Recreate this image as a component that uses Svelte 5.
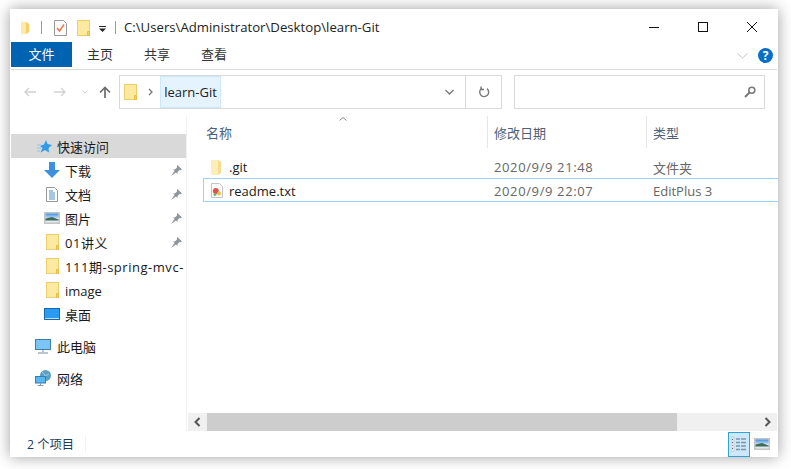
<script>
  const quick = [
    { label: '下载', icon: 'down', pin: true },
    { label: '文档', icon: 'doc', pin: true },
    { label: '图片', icon: 'pic', pin: true },
    { label: '01讲义', icon: 'folder', pin: true, wide: true },
    { label: '111期-spring-mvc-', icon: 'folder', pin: false, wide: true },
    { label: 'image', icon: 'folder', pin: false },
    { label: '桌面', icon: 'desk', pin: false }
  ];
</script>

{#snippet folder(cls)}
  <svg class={cls} viewBox="0 0 13 16" width="13" height="16">
    <rect x="0.5" y="0.5" width="12" height="15" fill="#ffe9a0" stroke="#eccf6a"/>
    <path d="M10.5 15.5V11.5H12.5V15.5Z" fill="#f5cf5c" stroke="#e9bf47" stroke-width="1"/>
  </svg>
{/snippet}

{#snippet pic()}
  <svg viewBox="0 0 16 12" width="16" height="12">
    <defs>
      <linearGradient id="sky" x1="0" y1="0" x2="0" y2="1">
        <stop offset="0" stop-color="#3f8fe0"/><stop offset="1" stop-color="#cfe5f5"/>
      </linearGradient>
    </defs>
    <rect x="0" y="0" width="16" height="12" fill="#c4c4c4"/>
    <rect x="1.500" y="1.500" width="13" height="9" fill="#dfe9ef"/>
    <rect x="1.500" y="1.500" width="13" height="5" fill="url(#sky)"/>
    <path d="M1.500 6.500L8 5L14.500 7.500V8.500H1.500Z" fill="#3e6a58"/>
  </svg>
{/snippet}

<div class="page">
  <div class="window">
    <header class="titlebar">
      <svg class="t-small" viewBox="0 0 9 13" width="9" height="13">
        <path d="M0 1H5L8 3V11L5 13H0Z" fill="#ffe9a8"/><path d="M5 1L8 3V11L5 13Z" fill="#f3d069"/>
      </svg>
      <span class="t-sep s1"></span>
      <svg class="t-doc" viewBox="0 0 13 16" width="13" height="16">
        <path d="M.5.5H9.500L12.500 3.500V15.500H.5Z" fill="#fafafa" stroke="#9a9a9a"/>
        <path d="M3 8L5.500 11L10 4.500" fill="none" stroke="#e8764a" stroke-width="1.400"/>
      </svg>
      {@render folder('t-folder')}
      <svg class="t-drop" viewBox="0 0 7 6" width="7" height="6">
        <rect x="0" y="0" width="7" height="1" fill="#222"/><path d="M0 2.500H7L3.500 6Z" fill="#222"/>
      </svg>
      <span class="t-sep s2"></span>
      <span class="title">C:\Users\Administrator\Desktop\learn-Git</span>
      <div class="controls">
        <svg viewBox="0 0 10 10" width="10" height="10"><path d="M0 5.500H10" stroke="#111" fill="none"/></svg>
        <svg viewBox="0 0 10 10" width="10" height="10"><rect x=".5" y=".5" width="9" height="9" stroke="#111" fill="none"/></svg>
        <svg viewBox="0 0 10 10" width="10" height="10"><path d="M0 0L10 10M10 0L0 10" stroke="#111" fill="none"/></svg>
      </div>
    </header>

    <nav class="ribbon">
      <span class="tab active">文件</span>
      <span class="tab t1">主页</span>
      <span class="tab t2">共享</span>
      <span class="tab t3">查看</span>
      <svg class="collapse" viewBox="0 0 11 6" width="11" height="6"><path d="M.5.5L5.500 5L10.500.5" fill="none" stroke="#c4c4c4"/></svg>
      <span class="help">?</span>
    </nav>

    <div class="toolbar">
      <div class="navs">
        <svg viewBox="0 0 12 10" width="12" height="10"><path d="M12 5H1M5 1L1 5L5 9" fill="none" stroke="#d2d2d2" stroke-width="1.400"/></svg>
        <svg class="fw" viewBox="0 0 12 10" width="12" height="10"><path d="M0 5H11M7 1L11 5L7 9" fill="none" stroke="#d2d2d2" stroke-width="1.400"/></svg>
        <svg class="dn" viewBox="0 0 6 4" width="6" height="4"><path d="M.5.5L3 3L5.500.5" fill="none" stroke="#d2d2d2"/></svg>
        <svg class="up" viewBox="0 0 12 12" width="12" height="12"><path d="M6 12V1.500M1 6.500L6 1.500L11 6.500" fill="none" stroke="#6d6d6d" stroke-width="1.700"/></svg>
      </div>
      <div class="address">
        {@render folder('a-folder')}
        <svg class="a-arrow" viewBox="0 0 5 8" width="5" height="8"><path d="M1 1L4 4L1 7" fill="none" stroke="#777" stroke-width="1.300"/></svg>
        <span class="crumb">learn-Git</span>
        <svg class="a-chev" viewBox="0 0 9 6" width="9" height="6"><path d="M.5 1L4.500 5L8.500 1" fill="none" stroke="#777" stroke-width="1.300"/></svg>
        <span class="refresh">
          <svg viewBox="0 0 12 12" width="12" height="12"><path d="M4 2.200A4.500 4.500 0 1 0 9 2.600M3 .5V3.500H6" fill="none" stroke="#7a7a7a" stroke-width="1.400"/></svg>
        </span>
      </div>
      <div class="search">
        <svg viewBox="0 0 12 12" width="12" height="12"><circle cx="7.800" cy="4.200" r="3" fill="none" stroke="#777" stroke-width="1.500"/><path d="M5.500 6.500L1 11" stroke="#777" stroke-width="2"/></svg>
      </div>
    </div>

    <div class="body">
      <aside class="side">
        <div class="row top hover">
          <svg class="qa" viewBox="0 0 15 13" width="15" height="13"><path d="M9 0L10.500 4L15 5L11.500 8L12 12.500L8 10L3.500 12.500L5.500 8L3 6L7 4.500Z" fill="#2f9be8"/><path d="M0 5H4M0 8H4M0 11H3" stroke="#8cc8f2"/></svg>
          <span>快速访问</span>
        </div>
        {#each quick as item}
          <div class="row sub">
            <span class="ico">
              {#if item.icon === 'down'}
                <svg viewBox="0 0 16 16" width="16" height="16"><path d="M5 0H11V8H16L8 16L0 8H5Z" fill="#3d8fdf"/></svg>
              {:else if item.icon === 'doc'}
                <svg viewBox="0 0 12 15" width="12" height="15"><path d="M.5.5H8.500L11.500 3.500V14.500H.5Z" fill="#fff" stroke="#999"/><path d="M3 4H7M3 6H9M3 8H9M3 10H9M3 12H9" stroke="#4a8fc7"/></svg>
              {:else if item.icon === 'pic'}
                {@render pic()}
              {:else if item.icon === 'folder'}
                {@render folder('s-folder')}
              {:else}
                <svg viewBox="0 0 16 12" width="16" height="12"><rect x=".5" y=".5" width="15" height="11" fill="#2a9bf0" stroke="#1468b0"/><path d="M1 10.500H15" stroke="#bfe0f8"/></svg>
              {/if}
            </span>
            <span class="label" class:wide={item.wide}>{item.label}</span>
            {#if item.pin}
              <svg class="pin" viewBox="0 0 11 11" width="11" height="11"><path d="M6.500 0L11 4.500L9.800 5.200L8.600 4.900L6.500 7.300V9L2 4.500H3.700L6.100 2.400L5.800 1.200ZM3.500 6L0 11L5 7.500Z" fill="#8f979d"/></svg>
            {/if}
          </div>
        {/each}
        <div class="row top gap">
          <svg class="ico-top" viewBox="0 0 16 15" width="16" height="15"><rect x=".5" y=".5" width="15" height="10" fill="#7cc4f5" stroke="#3d7fa8"/><path d="M8 11V13M3 14H13" stroke="#a9b2b9" stroke-width="1.500"/></svg>
          <span>此电脑</span>
        </div>
        <div class="row top gap">
          <svg class="ico-top" viewBox="0 0 16 16" width="16" height="16"><circle cx="10.500" cy="5.500" r="5.500" fill="#5a9fc4"/><path d="M7 2Q10 4 10 6L14 4" fill="none" stroke="#9fd0e6"/><rect x=".5" y="6.500" width="10" height="6.500" fill="#59b6ef" stroke="#2f7fb3"/><path d="M5.500 13V15M2.500 15.500H8.500" stroke="#8a99a5"/></svg>
          <span>网络</span>
        </div>
      </aside>

      <main class="list">
        <div class="cols">
          <svg class="sort" viewBox="0 0 8 4" width="8" height="4"><path d="M.5 3.500L4 .5L7.500 3.500" fill="none" stroke="#8c8c8c"/></svg>
          <span class="h c-name">名称</span>
          <span class="h c-date">修改日期</span>
          <span class="h c-type">类型</span>
        </div>
        <div class="file first">
          <svg class="f-ico" viewBox="0 0 10 16" width="10" height="16"><path d="M0 1H7V16H1L0 15Z" fill="#fdeeb8"/><path d="M7 1L10 3V14L7 16Z" fill="#f7dc8d"/></svg>
          <span class="f-name">.git</span>
          <span class="f-date">2020/9/9 21:48</span>
          <span class="f-type">文件夹</span>
        </div>
        <div class="file selected">
          <svg class="f-ico doc" viewBox="0 0 12 15" width="12" height="15"><path d="M.5.5H8.500L11.500 3.500V14.500H.5Z" fill="#fff" stroke="#c4c4c4"/><circle cx="4.800" cy="8" r="3" fill="#e0524a"/><circle cx="8" cy="10.500" r="2" fill="#e8c14a"/><circle cx="4" cy="11.500" r="1.500" fill="#7fb069"/></svg>
          <span class="f-name">readme.txt</span>
          <span class="f-date">2020/9/9 22:07</span>
          <span class="f-type">EditPlus 3</span>
        </div>
        <div class="spacer"></div>
        <div class="hscroll">
          <span class="sb-btn"><svg viewBox="0 0 7 10" width="7" height="10"><path d="M5.500 1L1.500 5L5.500 9" fill="none" stroke="#555" stroke-width="2"/></svg></span>
          <span class="thumb"></span>
          <span class="sb-fill"></span>
          <span class="sb-btn"><svg viewBox="0 0 7 10" width="7" height="10"><path d="M1.500 1L5.500 5L1.500 9" fill="none" stroke="#555" stroke-width="2"/></svg></span>
        </div>
      </main>
    </div>

    <footer class="status">
      <span class="count">2 个项目</span>
      <span class="st-sep"></span>
      <span class="view on">
        <svg viewBox="0 0 16 16" width="16" height="16">
          <rect x="0" y="1" width="3" height="15" fill="#e6e6e6" stroke="#b5bcc2" stroke-width=".5"/>
          <path d="M1.500 3V4M1.500 6V7" stroke="#667"/><path d="M1.500 9V10" stroke="#d88"/><path d="M1.500 12V13" stroke="#667"/>
          <path d="M5 3H9M10 3H15M5 6.500H9M10 6.500H15M5 10H9M10 10H15M5 13.500H9M10 13.500H15" stroke="#7d94a5" stroke-width="1.300"/>
        </svg>
      </span>
      <span class="view pic">{@render pic()}</span>
    </footer>
  </div>
</div>

<style>
  :global(body) { margin: 0; background: #fff; }
  .page {
    width: 791px; height: 469px; box-sizing: border-box;
    padding: 9px 13px 12px 10px; overflow: hidden; background: #fff;
  }
  .window {
    width: 768px; height: 448px; background: #fff; display: flex; flex-direction: column;
    box-shadow: 0 0 14px rgba(0,0,0,.38);
    font: 13px "Open Sans", "Noto Sans CJK SC", sans-serif; color: #1a1a1a;
  }
  .titlebar { height: 31px; flex: none; display: flex; align-items: center; padding: 6px 0 0 11px; box-sizing: border-box; }
  .t-sep { width: 1px; height: 13px; background: #9a9a9a; }
  .s1 { margin-left: 11px; }
  .t-doc { margin-left: 12px; }
  .t-folder { margin-left: 10px; }
  .t-drop { margin-left: 9px; margin-top: 2px; }
  .s2 { margin-left: 9px; }
  .title { margin-left: 8px; margin-top: -2px; font-size: 13.2px; color: #222; line-height: 16px; white-space: nowrap; }
  .controls { margin-left: auto; display: flex; gap: 39px; padding-right: 21px; margin-top: -2px; }

  .ribbon {
    height: 30px; flex: none; display: flex; align-items: flex-start; box-sizing: border-box;
    padding: 2px 0 0 1px; border-bottom: 1px solid #dadada; font-size: 13px; margin-left: 1px; margin-right: 1px;
  }
  .tab { height: 25px; line-height: 25px; color: #333; }
  .tab.active { width: 61px; background: #0063b1; color: #fff; text-align: center; margin-left: -1px; }
  .t1 { margin-left: 15px; }
  .t2 { margin-left: 31px; }
  .t3 { margin-left: 31px; }
  .collapse { margin-left: auto; margin-top: 11px; }
  .help {
    width: 15px; height: 15px; border-radius: 50%; background: #0a6fc8; color: #fff; font-size: 12px; font-weight: 700;
    line-height: 15px; text-align: center; margin: 6px 4px 0 10px;
  }

  .toolbar { height: 46px; flex: none; display: flex; padding-top: 5px; box-sizing: border-box; }
  .navs { width: 109px; flex: none; height: 34px; display: flex; align-items: center; padding: 0 0 0 14px; box-sizing: border-box; }
  .fw { margin-left: 18px; }
  .dn { margin-left: 16px; }
  .up { margin-left: 11px; }
  .address {
    width: 383px; height: 34px; box-sizing: border-box; border: 1px solid #d9d9d9; display: flex; align-items: center; flex: none;
  }
  .a-folder { margin-left: 4px; }
  .a-arrow { margin-left: 11px; }
  .crumb {
    margin-left: 7px; width: 61px; height: 32px; box-sizing: border-box; background: #e5f3ff; border: 1px solid #cce8ff;
    line-height: 30px; text-align: center; color: #222;
  }
  .a-chev { margin-left: auto; margin-right: 11px; }
  .refresh { width: 35px; height: 32px; border-left: 1px solid #d9d9d9; display: flex; align-items: center; justify-content: center; }
  .search {
    margin-left: 12px; width: 251px; height: 34px; box-sizing: border-box; border: 1px solid #d9d9d9;
    display: flex; align-items: center; justify-content: flex-end; padding-right: 8px; flex: none;
  }

  .body { flex: 1; min-height: 0; display: flex; }
  .side { width: 176px; flex: none; box-sizing: border-box; padding-top: 18px; border-right: 1px solid #f0f0f0; margin-left: 1px; }
  .row { height: 24px; display: flex; align-items: center; color: #1a1a1a; white-space: nowrap; overflow: hidden; }
  .top { padding-left: 24px; }
  .top svg { margin-right: 6px; flex: none; }
  .hover { background: #d9d9d9; }
  .qa { margin-left: 2px; margin-right: 5px !important; }
  .sub { padding-left: 33px; }
  .ico { width: 16px; height: 16px; display: flex; align-items: center; justify-content: center; flex: none; }
  .label { margin-left: 5px; margin-top: 2px; line-height: 22px; }
  .label.wide { letter-spacing: .53px; }
  .pin { margin-left: auto; margin-right: 4px; flex: none; }
  .gap { margin-top: 8px; }

  .list { flex: 1; min-width: 0; display: flex; flex-direction: column; padding-left: 1px; }
  .cols { height: 33px; flex: none; position: relative; color: #4c607a; }
  .cols .h { position: absolute; top: 0; height: 32px; line-height: 35px; }
  .sort { position: absolute; left: 151px; top: 1px; }
  .c-name { left: 18px; }
  .c-date { left: 299px; border-left: 1px solid #e5e5e5; padding-left: 6px; }
  .c-type { left: 458px; border-left: 1px solid #e5e5e5; padding-left: 6px; }
  .file { height: 24px; box-sizing: border-box; display: grid; align-items: center; margin-left: 15px; flex: none; }
  .first { margin-top: 6px; margin-bottom: -1px; padding-left: 8px; grid-template-columns: 17px 266px 159px 1fr; }
  .selected { border: 1px solid #99d1ff; border-right: none; padding-left: 7px; grid-template-columns: 17px 266px 159px 1fr; padding-top: 1px; }
  .f-name { color: #1a1a1a; margin-left: 1px; }
  .f-date { color: #666; letter-spacing: .62px; }
  .f-type { color: #666; }
  .spacer { flex: 1; }
  .hscroll { height: 18px; flex: none; display: flex; background: #f0f0f0; margin-right: 1px; }
  .sb-btn { width: 19px; display: flex; align-items: center; justify-content: center; flex: none; }
  .thumb { width: 470px; background: #cdcdcd; }
  .sb-fill { flex: 1; }

  .status { height: 26px; flex: none; display: flex; align-items: center; padding-left: 17px; font-size: 12.3px; color: #1e395b; }
  .count { width: 58px; }
  .st-sep { width: 1px; height: 16px; background: #f0f0f0; }
  .view { display: flex; align-items: center; justify-content: center; box-sizing: border-box; }
  .on { margin-left: auto; width: 22px; height: 25px; background: #cce8ff; border: 1px solid #2ea4dc; }
  .view.pic { margin-left: 3px; margin-right: 8px; width: 17px; }
</style>
